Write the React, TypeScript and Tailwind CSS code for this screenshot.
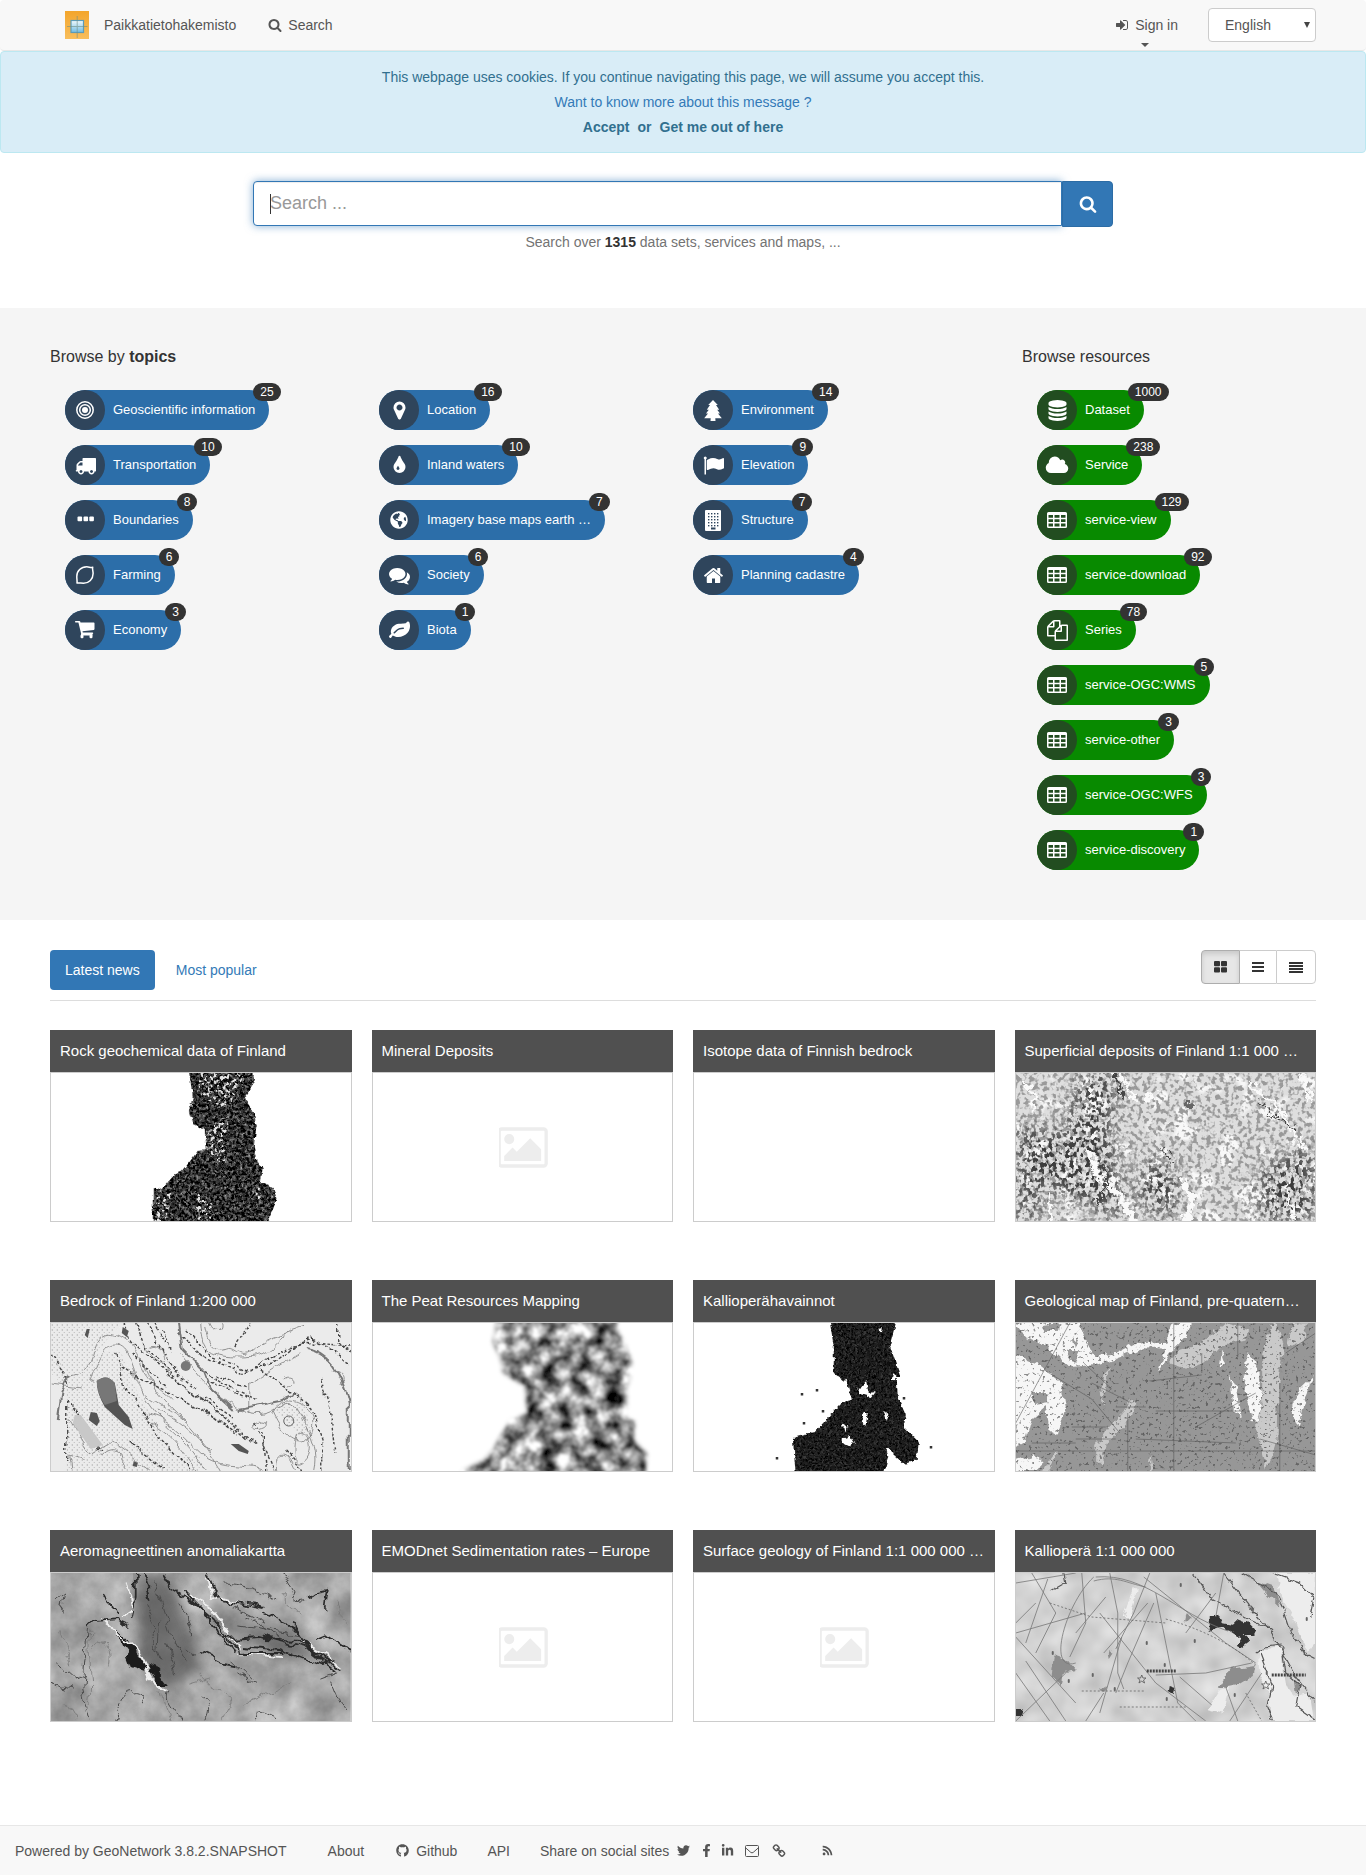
import React from "react";
import { FaFacebookF, FaGithub, FaGlobeAmericas, FaLinkedinIn, FaRss, FaTwitter } from "react-icons/fa";

const SEARCH =
  "M1216 832q0-185-131.5-316.5t-316.5-131.5-316.5 131.5-131.5 316.5 131.5 316.5 316.5 131.5 316.5-131.5 131.5-316.5zm512 832q0 52-38 90t-90 38q-54 0-90-38l-343-342q-179 124-399 124-143 0-273.5-55.5t-225-150-150-225-55.5-273.5 55.5-273.5 150-225 225-150 273.5-55.5 273.5 55.5 225 150 150 225 55.5 273.5q0 220-124 399l343 343q37 37 37 90z";
const SIGN_IN =
  "M1312 896q0 26-19 45l-544 544q-19 19-45 19t-45-19-19-45v-288h-448q-26 0-45-19t-19-45v-384q0-26 19-45t45-19h448v-288q0-26 19-45t45-19 45 19l544 544q19 19 19 45zm352-352v704q0 119-84.5 203.5t-203.5 84.5h-320q-13 0-22.5-9.5t-9.5-22.5q0-4-1-20t-.5-26.5 3-23.5 10-19.5 20.5-6.5h320q66 0 113-47t47-113v-704q0-66-47-113t-113-47h-312l-11.5-1-11.5-3-8-5.5-7-9-2-13.5q0-4-1-20t-.5-26.5 3-23.5 10-19.5 20.5-6.5h320q119 0 203.5 84.5t84.5 203.5z";
const MARKER =
  "M1152 640q0-106-75-181t-181-75-181 75-75 181 75 181 181 75 181-75 75-181zm256 0q0 109-33 179l-364 774q-16 33-47.5 52t-67.5 19-67.5-19-46.5-52l-365-774q-33-70-33-179 0-212 150-362t362-150 362 150 150 362z";
const TRUCK =
  "M640 1408q0-52-38-90t-90-38-90 38-38 90 38 90 90 38 90-38 38-90zm-384-512h384v-256h-158q-13 0-22 9l-195 195q-9 9-9 22v30zm1280 512q0-52-38-90t-90-38-90 38-38 90 38 90 90 38 90-38 38-90zm256-1088v1024q0 15-4 26.5t-13.5 18.5-16.5 11.5-23.5 6-22.5 2-25.5 0-22.5-.5q0 106-75 181t-181 75-181-75-75-181h-384q0 106-75 181t-181 75-181-75-75-181h-64q-3 0-22.5.5t-25.5 0-22.5-2-23.5-6-16.5-11.5-13.5-18.5-4-26.5q0-26 19-45t45-19v-320q0-8-.5-35t0-38 2.5-34.5 6.5-37 14-30.5 22.5-30l198-198q19-19 50.5-32t58.5-13h160v-192q0-26 19-45t45-19h1024q26 0 45 19t19 45z";
const TINT =
  "M896 1152q0-36-20-69-1-1-15.5-22.5t-25.5-38-25-44-21-50.5q-4-16-21-16t-21 16q-7 23-21 50.5t-25 44-25.5 38-15.5 22.5q-20 33-20 69 0 53 37.5 90.5t90.5 37.5 90.5-37.5 37.5-90.5zm512-128q0 212-150 362t-362 150-362-150-150-362q0-145 81-275 6-9 62.5-90.5t101-151 99.5-178 83-201.5q9-30 34-47t51-17 51.5 17 33.5 47q28 93 83 201.5t99.5 178 101 151 62.5 90.5q81 127 81 275z";
const COMMENTS =
  "M1408 768q0 139-94 257t-256.5 186.5-353.5 68.5q-86 0-176-16-124 88-278 128-36 9-86 16h-3q-11 0-20.5-8t-11.5-21q-1-3-1-6.5t.5-6.5 2-6l2.5-5 3.5-5.5 4-5 4.5-5 4-4.5q5-6 23-25t26-29.5 22.5-29 25-38.5 20.5-44q-124-72-195-177t-71-224q0-139 94-257t256.5-186.5 353.5-68.5 353.5 68.5 256.5 186.5 94 257zm384 256q0 120-71 224.5t-195 176.5q10 24 20.5 44t25 38.5 22.5 29 26 29.5 23 25q1 1 4 4.5t4.5 5 4 5 3.5 5.5l2.5 5 2 6 .5 6.5-1 6.5q-3 14-13 22t-22 7q-50-7-86-16-154-40-278-128-90 16-176 16-271 0-472-132 58 4 88 4 161 0 309-45t264-129q125-92 192-212t67-254q0-77-23-152 129 71 204 178t75 230z";
const LEAF =
  "M1280 704q0-26-19-45t-45-19q-172 0-318 49.5t-259.5 134-235.5 219.5q-19 21-19 45 0 26 19 45t45 19q24 0 45-19 27-24 74-71t67-66q137-124 268.5-176t313.5-52q26 0 45-19t19-45zm512-198q0 95-20 193-46 224-184.5 383t-357.5 268q-214 108-438 108-148 0-286-47-15-5-88-42t-96-37q-16 0-39.5 32t-45 70-52.5 70-60 32q-43 0-63.5-17.5t-45.5-59.5q-2-4-6-11t-5.5-10-3-9.5-1.5-13.5q0-35 31-73.5t68-65.5 68-56 31-48q0-4-14-38t-16-44q-9-51-9-104 0-115 43.5-220t119-184.5 170.5-139 204-95.5q55-18 145-25.5t179.5-9 178.5-6 163.5-24 113.5-56.5l29.5-29.5 29.5-28 27-20 36.5-16 43.5-4.5q39 0 70.5 46t47.5 112 24 124 8 96z";
const FLAG =
  "M320 256q0 72-64 110v1266q0 13-9.5 22.5t-22.5 9.5h-64q-13 0-22.5-9.5t-9.5-22.5v-1266q-64-38-64-110 0-53 37.5-90.5t90.5-37.5 90.5 37.5 37.5 90.5zm1472 64v763q0 25-12.5 38.5t-39.5 27.5q-215 116-369 116-61 0-123.5-22t-108.5-48-115.5-48-142.5-22q-192 0-464 146-17 9-33 9-26 0-45-19t-19-45v-742q0-32 31-55 21-14 79-43 236-120 421-120 107 0 200 29t219 88q38 19 88 19 54 0 117.5-21t110-47 88-47 54.5-21q26 0 45 19t19 45z";
const HOME =
  "M1472 992v480q0 26-19 45t-45 19h-384v-384h-256v384h-384q-26 0-45-19t-19-45v-480q0-1 .5-3t.5-3l575-474 575 474q1 2 1 6zm223-69l-62 74q-8 9-21 11h-3q-13 0-21-7l-692-577-692 577q-12 8-24 7-13-2-21-11l-62-74q-8-10-7-23.5t11-21.5l719-599q32-26 76-26t76 26l244 204v-195q0-14 9-23t23-9h192q14 0 23 9t9 23v408l219 182q10 8 11 21.5t-7 23.5z";
const DATABASE =
  "M896 768q237 0 443-43t325-127v170q0 69-103 128t-280 93.5-385 34.5-385-34.5-280-93.5-103-128v-170q119 84 325 127t443 43zm0 768q237 0 443-43t325-127v170q0 69-103 128t-280 93.5-385 34.5-385-34.5-280-93.5-103-128v-170q119 84 325 127t443 43zm0-384q237 0 443-43t325-127v170q0 69-103 128t-280 93.5-385 34.5-385-34.5-280-93.5-103-128v-170q119 84 325 127t443 43zm0-1152q208 0 385 34.5t280 93.5 103 128v128q0 69-103 128t-280 93.5-385 34.5-385-34.5-280-93.5-103-128v-128q0-69 103-128t280-93.5 385-34.5z";
const CLOUD =
  "M1984 1152q0 159-112.5 271.5t-271.5 112.5h-1088q-185 0-316.5-131.5t-131.5-316.5q0-132 71-241.5t187-163.5q-2-28-2-43 0-212 150-362t362-150q158 0 286.5 88t187.5 230q70-62 166-62 106 0 181 75t75 181q0 75-41 138 129 30 213 134.5t84 239.5z";
const FILES =
  "M1696 384q40 0 68 28t28 68v1216q0 40-28 68t-68 28h-960q-40 0-68-28t-28-68v-288h-544q-40 0-68-28t-28-68v-672q0-40 20-88t48-76l408-408q28-28 76-48t88-20h416q40 0 68 28t28 68v328q68-40 128-40h416zm-544 213l-299 299h299v-299zm-640-384l-299 299h299v-299zm196 647l316-316v-416h-384v416q0 40-28 68t-68 28h-416v640h512v-256q0-40 20-88t48-76zm956 804v-1152h-384v416q0 40-28 68t-68 28h-416v640h896z";
const PICTURE =
  "M576 576q0 80-56 136t-136 56-136-56-56-136 56-136 136-56 136 56 56 136zm1024 384v448h-1408v-192l320-320 160 160 512-512zm96-704h-1600q-13 0-22.5 9.5t-9.5 22.5v1216q0 13 9.5 22.5t22.5 9.5h1600q13 0 22.5-9.5t9.5-22.5v-1216q0-13-9.5-22.5t-22.5-9.5zm160 32v1216q0 66-47 113t-113 47h-1600q-66 0-113-47t-47-113v-1216q0-66 47-113t113-47h1600q66 0 113 47t47 113z";
const LINK =
  "M1520 1216q0-40-28-68l-208-208q-28-28-68-28-42 0-72 32 3 3 19 18.5t21.5 21.5 15 19 13 25.5 3.5 27.5q0 40-28 68t-68 28q-15 0-27.5-3.5t-25.5-13-19-15-21.5-21.5-18.5-19q-33 31-33 73 0 40 28 68l206 207q27 27 68 27 40 0 68-26l147-146q28-28 28-67zm-703-705q0-40-28-68l-206-207q-28-28-68-28-39 0-68 27l-147 146q-28 28-28 67 0 40 28 68l208 208q27 27 68 27 42 0 72-31-3-3-19-18.5t-21.5-21.5-15-19-13-25.5-3.5-27.5q0-40 28-68t68-28q15 0 27.5 3.5t25.5 13 19 15 21.5 21.5 18.5 19q33-31 33-73zm895 705q0 120-85 203l-147 146q-83 83-203 83-121 0-204-85l-206-207q-83-83-83-203 0-123 88-209l-88-88q-86 88-208 88-120 0-204-84l-208-208q-84-84-84-204t85-203l147-146q83-83 203-83 121 0 204 85l206 207q83 83 83 203 0 123-88 209l88 88q86-88 208-88 120 0 204 84l208 208q84 84 84 204z";

function Glyph({ d, className, width = 1792 }: { d: string; className: string; width?: number }) {
  return (
    <svg viewBox={`0 0 ${width} 1792`} className={className} fill="currentColor" aria-hidden="true">
      <path d={d} />
    </svg>
  );
}

const big = "size-[21px]";

function TargetIcon() {
  return (
    <svg viewBox="0 0 18 18" className="size-[18px]" fill="none" stroke="currentColor" strokeWidth="1.5" aria-hidden="true">
      <circle cx="9" cy="9" r="8.2" />
      <circle cx="9" cy="9" r="5.3" />
      <circle cx="9" cy="9" r="3" fill="currentColor" stroke="none" />
    </svg>
  );
}
function DotsIcon() {
  return (
    <svg viewBox="0 0 17 8" className="h-2 w-[17px]" fill="currentColor" aria-hidden="true">
      <rect x="0.5" y="0.5" width="4.600" height="4.800" rx="1" />
      <rect x="6.500" y="0.5" width="4.600" height="4.800" rx="1" />
      <rect x="12.300" y="0.5" width="4.600" height="4.800" rx="1" />
    </svg>
  );
}
function LemonIcon() {
  return (
    <svg viewBox="0 0 18 18" className="size-[18px]" fill="none" stroke="currentColor" strokeWidth="1.5" strokeLinejoin="round" aria-hidden="true">
      <path d="M16.7 1.2C15 2 13 .8 10.800 .8C5 .8 .8 5 .8 10.500C.8 13.500 1.300 15 1 17.100C3 16.800 5 17.200 7.500 17.200C13 17.200 17.100 13 17.100 7.500C17.100 5 16.100 3 16.700 1.200Z" />
    </svg>
  );
}
function CartIcon() {
  return (
    <svg viewBox="0 0 20 18" className="h-[18px] w-5" fill="currentColor" aria-hidden="true">
      <path d="M.6 0H4.400Q5.100 0 5.300 .8L5.500 1.500H18.800Q19.500 1.500 19.500 2.300V8Q19.500 8.700 18.800 8.900L7.500 10.300L7.800 11.500H17.500Q18.200 11.500 18.200 12.200T17.500 13H6.900Q6.300 13 6.100 12.400L3.400 1.500H.6Q0 1.500 0 .8T.6 0Z" />
      <rect x="5.500" y="13.500" width="3" height="3.800" rx="1.200" />
      <rect x="14.500" y="13.500" width="3" height="3.800" rx="1.200" />
      <rect x="6" y="12.500" width="11.500" height="2" />
    </svg>
  );
}
function TreeIcon() {
  return (
    <svg viewBox="0 0 18 21" className="h-[21px] w-[18px]" fill="currentColor" aria-hidden="true">
      <path d="M9 0L13.800 5H12L15.200 9.800H13.200L16 13.600H14L17.800 18.200H11.300L11.500 21H6.500L6.700 18.200H.2L4 13.600H2L4.800 9.800H2.800L6 5H4.200Z" />
    </svg>
  );
}
function BuildingIcon() {
  const rows = [3, 6, 9, 12, 15];
  return (
    <svg viewBox="0 0 16 21" className="h-[21px] w-4" aria-hidden="true">
      <rect width="16" height="21" rx="1" fill="currentColor" />
      {rows.map((y) =>
        [3, 6, 9, 12].map((x) => <rect key={`${x}-${y}`} x={x} y={y} width="1.400" height="1.400" className="fill-[#2f455c]" />)
      )}
      <rect x="6" y="17.500" width="4.500" height="2" className="fill-[#2f455c]" />
    </svg>
  );
}
function TableIcon() {
  return (
    <svg viewBox="0 0 20 16" className="h-4 w-5" fill="currentColor" fillRule="evenodd" aria-hidden="true">
      <path d="M1.500 0h17q1.500 0 1.500 1.500v13q0 1.500-1.500 1.500h-17q-1.500 0-1.500-1.500v-13q0-1.500 1.500-1.500zM1.500 3h4.500v2.700h-4.500zM7.500 3h5v2.700h-5zM14 3h4.500v2.700h-4.500zM1.500 7.200h4.500v2.900h-4.500zM7.500 7.200h5v2.900h-5zM14 7.200h4.500v2.900h-4.500zM1.500 11.600h4.500v2.900h-4.500zM7.500 11.600h5v2.900h-5zM14 11.600h4.500v2.900h-4.500z" />
    </svg>
  );
}

type ChipData = { icon: React.ReactNode; label: string; count: number };

const topics: ChipData[][] = [
  [
    { icon: <TargetIcon />, label: "Geoscientific information", count: 25 },
    { icon: <Glyph d={MARKER} className={big} />, label: "Location", count: 16 },
    { icon: <TreeIcon />, label: "Environment", count: 14 },
  ],
  [
    { icon: <Glyph d={TRUCK} className={big} />, label: "Transportation", count: 10 },
    { icon: <Glyph d={TINT} className={big} />, label: "Inland waters", count: 10 },
    { icon: <Glyph d={FLAG} className={big} />, label: "Elevation", count: 9 },
  ],
  [
    { icon: <DotsIcon />, label: "Boundaries", count: 8 },
    { icon: <FaGlobeAmericas className="size-[18px]" />, label: "Imagery base maps earth …", count: 7 },
    { icon: <BuildingIcon />, label: "Structure", count: 7 },
  ],
  [
    { icon: <LemonIcon />, label: "Farming", count: 6 },
    { icon: <Glyph d={COMMENTS} className={big} />, label: "Society", count: 6 },
    { icon: <Glyph d={HOME} className={big} />, label: "Planning cadastre", count: 4 },
  ],
  [
    { icon: <CartIcon />, label: "Economy", count: 3 },
    { icon: <Glyph d={LEAF} className={big} />, label: "Biota", count: 1 },
  ],
];

const resources: ChipData[] = [
  { icon: <Glyph d={DATABASE} className={big} />, label: "Dataset", count: 1000 },
  { icon: <Glyph d={CLOUD} width={2048} className="h-[21px] w-6" />, label: "Service", count: 238 },
  { icon: <TableIcon />, label: "service-view", count: 129 },
  { icon: <TableIcon />, label: "service-download", count: 92 },
  { icon: <Glyph d={FILES} className={big} />, label: "Series", count: 78 },
  { icon: <TableIcon />, label: "service-OGC:WMS", count: 5 },
  { icon: <TableIcon />, label: "service-other", count: 3 },
  { icon: <TableIcon />, label: "service-OGC:WFS", count: 3 },
  { icon: <TableIcon />, label: "service-discovery", count: 1 },
];

function Chip({ icon, label, count, green }: ChipData & { green?: boolean }) {
  return (
    <a
      href="#"
      className={`relative inline-flex h-10 items-center rounded-[20px] pr-3.5 text-[13px] whitespace-nowrap text-white ${green ? "bg-[#088a00]" : "bg-[#2c6ea9]"}`}
    >
      <span className={`mr-2 flex size-10 items-center justify-center rounded-full ${green ? "bg-[#224d20]" : "bg-[#2f455c]"}`}>{icon}</span>
      {label}
      <span className="absolute -top-[7px] left-full -ml-4 h-[18px] rounded-[10px] bg-[#333] px-[7px] text-xs leading-[18px]">{count}</span>
    </a>
  );
}

/* Map previews, drawn on a 300 x 148 canvas. */

function Noise({ id, freq, octaves, seed, gain, bias }: { id: string; freq: string; octaves: number; seed: number; gain: number; bias: number }) {
  const row = `${gain} 0 0 0 ${bias}`;
  return (
    <filter id={id} x="0" y="0" width="100%" height="100%" colorInterpolationFilters="sRGB">
      <feTurbulence type="fractalNoise" baseFrequency={freq} numOctaves={octaves} seed={seed} result="n" />
      <feColorMatrix in="n" values={`${row} ${row} ${row} 0 0 0 0 1`} />
      <feComposite in2="SourceAlpha" operator="in" />
    </filter>
  );
}

function Specks({ id, freq, seed, gain, bias }: { id: string; freq: string; seed: number; gain: number; bias: number }) {
  return (
    <filter id={id} x="0" y="0" width="100%" height="100%" colorInterpolationFilters="sRGB">
      <feTurbulence type="fractalNoise" baseFrequency={freq} numOctaves={2} seed={seed} result="n" />
      <feColorMatrix in="n" values={`0 0 0 0 0 0 0 0 0 0 0 0 0 0 0 ${gain} 0 0 0 ${bias}`} result="a" />
      <feComposite in="SourceGraphic" in2="a" operator="in" />
    </filter>
  );
}

function Rough({ id, scale, freq = "0.15" }: { id: string; scale: number; freq?: string }) {
  return (
    <filter id={id} x="-5%" y="-5%" width="110%" height="110%" colorInterpolationFilters="sRGB">
      <feTurbulence type="fractalNoise" baseFrequency={freq} numOctaves={3} seed={4} result="n" />
      <feDisplacementMap in="SourceGraphic" in2="n" scale={scale} xChannelSelector="R" yChannelSelector="G" />
    </filter>
  );
}

function Canvas({ children }: { children: React.ReactNode }) {
  return (
    <svg viewBox="0 0 300 148" preserveAspectRatio="xMidYMid slice" className="size-full" fill="none" aria-hidden="true">
      {children}
    </svg>
  );
}

function GeochemMap() {
  return (
    <Canvas>
      <Noise id="geochem-n" freq="0.35" octaves={2} seed={7} gain={1.3} bias={-0.47} />
      <Specks id="geochem-w" freq="0.3" seed={2} gain={8} bias={-4.300} />
      <Rough id="geochem-r" scale={5} />
      <g filter="url(#geochem-r)">
        <path
          filter="url(#geochem-n)"
          fill="#222"
          d="M138-3L203-3L203 10L194 25L203 40L206 52L203 74L206 89L212 94L210 110L222 115L226 125L216 151L102 151L102 114L111 117L124 101L131 99L147 78L155 77L154 57L143 51L138 39L142 24Z"
        />
      </g>
      <path fill="#e4e4e4" filter="url(#geochem-w)" d="M146 0L194 0L184 24L176 36L150 24ZM156 56L178 40L174 92L160 84L152 76ZM106 124L124 118L114 148H104ZM144 118L162 130L160 148H146ZM204 112L214 118L206 130Z" />
    </Canvas>
  );
}

function SuperficialMap() {
  return (
    <Canvas>
      <Specks id="sup-a" freq="0.22" seed={3} gain={6} bias={-2.900} />
      <Specks id="sup-b" freq="0.24 0.2" seed={12} gain={9} bias={-4.500} />
      <Specks id="sup-w" freq="0.045" seed={31} gain={10} bias={-5.600} />
      <Rough id="sup-r" scale={16} />
      <filter id="sup-soft"><feGaussianBlur stdDeviation="10" /></filter>
      <mask id="sup-m">
        <g filter="url(#sup-soft)" fill="#fff">
          <path d="M62 0L105 0L95 50L110 148L40 120L0 90L0 50L50 60ZM0 60H25V148H0ZM245 95L300 70V148H240ZM130 80L165 100L160 148L120 130Z" />
        </g>
      </mask>
      <rect width="300" height="148" fill="#dedede" />
      <rect width="300" height="148" fill="#f8f8f8" filter="url(#sup-w)" />
      <rect width="300" height="148" fill="#9a9a9a" filter="url(#sup-a)" />
      <g mask="url(#sup-m)">
        <rect width="300" height="148" fill="#3c3c3c" filter="url(#sup-b)" />
      </g>
      <g filter="url(#sup-r)" stroke="#fafafa" strokeLinecap="round">
        <path strokeWidth="6" d="M74 80L84 106L104 122L118 148M166 108L176 126L170 148" />
        <path strokeWidth="3" d="M8 8L20 24L18 36M106 4L120 28M232 10L262 34L290 78M285 0L296 30M270 112L280 148M36 118L34 148" />
        <circle cx="134" cy="24" r="3" strokeWidth="4" />
      </g>
      <g filter="url(#sup-r)" stroke="#444">
        <path strokeWidth="3" d="M100 2L108 26M86 90L92 110L82 132" />
        <path strokeWidth="1.500" d="M244 28L258 44L280 56M148 76L158 90" />
        <path strokeWidth="8" stroke="#666" d="M173 28V36" />
      </g>
    </Canvas>
  );
}

function BedrockMap() {
  return (
    <Canvas>
      <pattern id="bed-dots" width="5" height="5" patternUnits="userSpaceOnUse">
        <path d="M1 1h1v2h-1zM3 4h1v1h-1z" fill="#bbb" />
      </pattern>
      <Rough id="bed-r" scale={9} freq="0.06" />
      <rect width="300" height="148" fill="#ebebeb" />
      <path fill="url(#bed-dots)" d="M0 0H72L60 12L46 30L30 56L10 60L0 50ZM48 30L70 28L80 56L110 110L130 148H16V60ZM224 86L254 80L262 118L246 110ZM120 136L150 132V148H120Z" />
      <g filter="url(#bed-r)">
        <g stroke="#888" strokeWidth="0.900">
          <path d="M12 56C24 50 36 54 42 30S64 8 78 20S96 60 116 80S150 112 170 148M40 60C50 30 60 14 72 26S82 60 100 84S140 120 156 148M156 4C160 24 166 30 176 26S190 40 204 26S236 12 254 4M150 0C152 30 160 34 190 34S220 22 240 8M160 0C164 10 172 10 170 0M130 30C150 60 160 70 190 86S236 70 244 84S270 120 264 148M18 96L40 130L60 118L100 148M96 92C120 96 130 112 150 130S200 140 214 148M100 100C120 110 130 124 146 148M108 88C128 96 144 110 160 128M92 70C110 84 120 86 136 100M88 40C96 60 110 66 120 76M94 20C100 30 104 14 112 30S100 40 94 20M112 40L122 56M222 90C230 70 262 76 262 100S240 130 222 90M246 112C260 100 264 130 254 138S240 130 246 112M50 132C60 120 78 130 72 144M226 148C224 130 236 124 244 148M198 62C206 58 232 40 250 30M198 62V90M0 60L30 64M34 138L18 132L20 148M206 100C216 94 222 104 210 106S200 104 206 100M232 56C240 50 246 60 236 62M282 48C290 44 296 56 290 62" />
        </g>
        <g stroke="#444" strokeWidth="1.400" strokeDasharray="3 2">
          <path d="M72 0L80 20L100 34L124 56L150 76L176 96L206 122M84 0L92 20L112 40L130 60L160 84L196 116M96 0L108 22L126 50L146 66M72 44L90 56L110 66L140 80L178 106M82 30L96 46L116 64M66 30L76 66L104 108L140 148M128 10L150 32L190 50L220 42L250 20L300 24M134 6L162 34L200 48L232 28L262 16L300 40M150 46L176 62L206 76M160 58L190 72M164 52L196 64M152 74L182 94M146 84L188 112M112 6L120 30M104 0L114 20M210 48L240 68L260 84L272 120V148M270 56L280 90L284 130M286 0V20L300 30M16 78V140M20 80L50 128M184 24L200 0M212 110L216 148M234 128L252 148M0 32L18 60M204 100L224 148M80 120L114 148" />
        </g>
        <g stroke="#777" strokeWidth="2">
          <path d="M128 0L132 26L152 46L160 66L182 86M256 26C280 30 292 54 298 80V148M18 52L10 70L6 96M188 86L230 78L244 72" />
        </g>
      </g>
      <g fill="#555">
        <path d="M46 58Q56 50 64 60L68 82L78 94L82 106L74 102L54 84Q46 70 46 58Z" />
        <path fill="#777" d="M46 58Q56 50 64 60L66 78L54 82Q46 70 46 58Z" />
        <path d="M40 89L46 90L49 98L46 103L38 97ZM180 121L188 121L198 128L197 131L188 128ZM72 4L78 8L76 14L71 10ZM36 6L39 6L37 15L34 12ZM83 138L87 140L86 144L82 143Z" />
        <circle cx="135" cy="43" r="5" fill="#777" />
      </g>
      <path fill="#c8c8c8" d="M24 92L30 92L52 122L40 126L22 100Z" />
      <circle cx="238" cy="98" r="5" fill="url(#bed-dots)" stroke="#666" />
    </Canvas>
  );
}

function PeatMap() {
  return (
    <Canvas>
      <Noise id="peat-n" freq="0.06" octaves={5} seed={21} gain={1.9} bias={-0.4} />
      <filter id="peat-s"><feGaussianBlur stdDeviation="1.100" /></filter>
      <filter id="peat-e"><feGaussianBlur stdDeviation="2" /></filter>
      <mask id="peat-m">
        <path
          filter="url(#peat-e)"
          fill="#fff"
          d="M125-6L243-6L246 10L250 17L255 26L259 40L257 56L253 67L255 80L253 94L262 99L261 117L274 130L272 156L86 156L92 146L112 137L124 120L138 97L154 90L152 62L142 58L130 49L128 36L120 19Z"
        />
      </mask>
      <g mask="url(#peat-m)">
        <g filter="url(#peat-s)">
          <rect x="70" y="-6" width="220" height="162" fill="#888" filter="url(#peat-n)" />
        </g>
      </g>
    </Canvas>
  );
}

function ObservationMap() {
  return (
    <Canvas>
      <Noise id="obs-n" freq="0.5" octaves={1} seed={9} gain={0.5} bias={-0.14} />
      <Rough id="obs-r" scale={5} freq="0.2" />
      <g filter="url(#obs-r)">
        <path
          filter="url(#obs-n)"
          fill="#1c1c1c"
          d="M136-3L203-3L196 22L206 52L203 55L204 74L212 92L210 104L225 119L223 137L210 141L196 128L190 151L102 151L99 115L121 109L149 79L158 77L153 59L140 50L140 24Z"
        />
        <path fill="#fff" d="M160 58L165 68L172 58L175 70L182 69L178 74L166 71ZM170 88L174 90L172 102L168 100ZM149 101L154 104L151 110ZM148 116L156 113L160 120L154 123L148 120ZM192 124L200 130L196 137ZM190 88L195 92L193 98ZM200 50L208 56L198 56ZM184 6L189 5L188 9Z" />
      </g>
      <g fill="#333">
        {[[108, 71], [123, 67], [210, 75], [129, 88], [138, 91], [110, 100], [83, 135], [237, 124]].map(([x, y]) => (
          <rect key={`${x}-${y}`} x={x - 1} y={y - 1} width="2.500" height="2.500" />
        ))}
      </g>
    </Canvas>
  );
}

function GeologicalMap() {
  return (
    <Canvas>
      <Rough id="geo-r" scale={8} freq="0.12" />
      <Specks id="geo-n" freq="0.3" seed={5} gain={9} bias={-5.600} />
      <rect width="300" height="148" fill="#979797" />
      <g filter="url(#geo-r)">
        <path fill="#f6f6f6" d="M-4-4L62-4L70 18L78 34L100 30L120 20L140 18L152 18L158 0L176 0L170 14L156 28L142 48L150 26L128 24L104 34L80 42L54 44L30 22L10 14ZM-4 32L24 42L46 60L50 84L42 112L34 108L30 84L16 96L10 118L0 124ZM232 28L242 44L248 100L236 98L228 60ZM214 52L222 70L226 94L218 86ZM298 52L290 72L282 104L276 88L284 66ZM206 28L210 40L204 44ZM0 138L20 132L28 140L20 148H0Z" />
        <g fill="#c9c9c9" stroke="#888" strokeWidth="0.600">
          <path d="M256 0L262 4L268 20L264 60L262 118L250 148L246 132L240 106L246 80L246 30ZM152 40L162 28L180 22L196 10L210 0L234 6L230 18L206 22L190 40L170 46ZM112 78L120 80L118 92L104 108L92 120L86 142L80 140L80 122L92 104L106 90ZM88 50L96 42L90 60L88 88L84 66ZM26 148L42 126L40 136L34 148ZM132 148L136 130L138 148ZM276 0L292 0L286 20L272 24Z" />
        </g>
        <path fill="#999" d="M28 2L44 0L42 8L30 8ZM14 70L30 70L34 80L20 82ZM50 28L64 28L58 40ZM56 14L62 20L58 24Z" />
      </g>
      <rect width="300" height="148" fill="#444" filter="url(#geo-n)" opacity="0.6" />
      <g stroke="#555" strokeWidth="0.700" opacity="0.800">
        <path d="M158 0V148M112 90V148M0 128H300M222 0V34M264 60V148M100 84H130M30 48L76 76L104 110M76 60L116 80M54 0L0 100M134 58L186 52M140 88H230M180 104L222 80L240 70M56 104H90M16 120H60M60 116H100M186 30V50M120 116L220 120M244 116L300 132M68 40L96 66M270 30L300 10" />
        <path strokeDasharray="1 5" strokeWidth="1.500" d="M50 100L200 120M170 60L230 90M180 20L240 10M250 10V130M270 50L286 140M72 8L130 12M180 88L180 140" />
      </g>
    </Canvas>
  );
}

function MagneticMap() {
  return (
    <Canvas>
      <Rough id="mag-r" scale={14} freq="0.06" />
      <Noise id="mag-n" freq="0.025" octaves={5} seed={14} gain={0.45} bias={0.43} />
      <filter id="mag-s"><feGaussianBlur stdDeviation="0.600" /></filter>
      <filter id="mag-b"><feGaussianBlur stdDeviation="7" /></filter>
      <rect width="300" height="148" fill="#aaa" filter="url(#mag-n)" />
      <path fill="#555" opacity="0.700" filter="url(#mag-b)" d="M86 0L116 0L140 50L150 90L120 120L90 90ZM180 56L240 60L280 92L220 82Z" />
      <g filter="url(#mag-s)">
        <g filter="url(#mag-r)" strokeLinecap="round">
          <path fill="#1c1c1c" d="M66 56L76 64L84 80L94 92L104 96L116 112L110 112L98 98L80 92L74 76Z" />
          <g stroke="#eee" strokeWidth="2">
            <path d="M50 46L64 56L86 78L100 104L116 118M76 12L82 36L72 42M134 18L160 34L180 62L190 80L230 84M252 70L276 84L288 92M158 0L164 24L200 34" />
          </g>
          <g stroke="#2b2b2b" strokeWidth="1.800">
            <path d="M38 54L44 48L66 46L80 52M84 0L84 26L80 44M56 22L66 40M92 0L100 24M112 0L122 16L150 34L164 46L180 70L192 80L234 80M134 18L152 36L160 48L184 80M158 0L170 28L214 36M176 66L210 64L256 76L284 98M216 42L244 56L262 78L288 96M214 66L248 68L270 84M266 66L276 62L300 80M258 26L266 20L276 18L274 34M150 80L170 90L184 92M190 72L230 76L270 92L284 88M240 50L252 66M256 72L270 90" />
          </g>
          <g stroke="#4a4a4a" strokeWidth="1">
            <path d="M38 56L34 90L32 116L40 148M6 90L24 106L34 100M0 110L20 116M170 10C190 10 210 18 222 24M182 34L214 50M190 52L250 62M196 44L236 70M240 20L252 30M232 0L244 22M150 120C160 124 162 140 154 148M204 148C200 130 210 136 226 144M280 110L288 130L296 140M270 106L286 100M118 118C112 130 126 138 130 148M4 28L14 20L10 40M96 30L104 60M104 10L120 60L136 90M110 50L108 80M116 70L124 100M100 60L112 90M134 74L146 80M128 30L140 60M64 148C72 120 84 110 94 130M188 100L204 112M180 86L200 106" />
          </g>
          <g stroke="#777" strokeWidth="0.800">
            <path d="M44 76C50 60 64 76 58 92M40 60C36 90 50 120 34 140M8 60L20 90M196 130L240 110M150 100L180 130L170 148M230 20L250 40M286 30L296 50M14 130L24 148M140 110L160 104M110 120L120 148" />
          </g>
        </g>
      </g>
    </Canvas>
  );
}

function KallioperaMap() {
  return (
    <Canvas>
      <Rough id="kal-r" scale={7} freq="0.1" />
      <Noise id="kal-n" freq="0.04" octaves={2} seed={8} gain={0.22} bias={0.71} />
      <rect width="300" height="148" fill="#d3d3d3" filter="url(#kal-n)" />
      <g filter="url(#kal-r)">
        <path fill="#ededed" d="M260 0L300 0V70L292 80L280 50L268 30ZM242 78L264 74L270 110L276 124L294 120L298 148H256L254 120L244 104ZM192 136L204 118L214 114L208 140ZM108 44L118 16L121 18L114 44Z" />
        <path fill="#8d8d8d" d="M38 82L50 86L60 98L48 100L46 112L36 104ZM202 116L214 96L240 92L238 102L222 112ZM240 8L258 14L264 34L250 20ZM82 118L92 112L88 120ZM170 40L174 44L168 50ZM92 76L98 80L94 86ZM278 108L286 112L280 120Z" />
        <path fill="#333" d="M194 42L202 42L206 50L216 52L222 46L232 50L240 58L238 62L228 62L234 68L226 74L222 72L226 66L214 58L204 54L194 58Z" />
        <path fill="#333" d="M154 112L160 114L158 121L153 118ZM0 136L8 136L6 142H0Z" />
        <g stroke="#555" strokeWidth="1.200">
          <path d="M48 0L50 10L36 18M208 0L236 36L256 60L280 104L300 130M178 0L194 24L232 46L254 56M226 0L260 20L268 36L276 60L292 84L300 88M256 0L284 10L298 24L294 44M240 80L250 74L266 72M244 80L256 112L252 134L258 148M266 74L270 100L284 112L280 134L300 148" />
        </g>
      </g>
      <g stroke="#777" strokeWidth="0.800">
        <path d="M32 6L10 70M20 30L0 50M66 0L70 50L54 84M94 0L102 40V100L108 116M134 0L118 40L100 76M138 30L112 90L100 120M132 30L88 80M140 20L150 70L162 130L180 148M84 40L140 110L190 148M70 40L0 60M0 10L60 0M78 4C50 30 30 100 60 90M80 4C130 0 160 40 212 58M16 0L40 40L20 80M0 64L60 130M0 100L34 148M10 88L50 148M78 8C100 2 110 10 130 14M0 148L50 100M106 64L84 140M128 4L210 70L240 90M140 102L190 100L236 90M200 44L208 0M164 104L196 132M214 148L246 100M222 148L210 114M170 60L200 20M60 60L90 24M88 120L70 148" />
        <path strokeDasharray="2 2" stroke="#666" d="M34 30L76 44L150 50M66 118H130M104 134H172M150 46C200 60 226 80 240 92M230 120L246 148" />
      </g>
      <path d="M131 98H160M256 102H290" stroke="#444" strokeWidth="3" strokeDasharray="2 1" />
      <path d="M126 102l1.200 3h3l-2.400 2 1 3-2.800-1.800-2.800 1.800 1-3-2.400-2h3zM250 108l1.200 3h3l-2.400 2 1 3-2.800-1.800-2.800 1.800 1-3-2.400-2h3z" stroke="#555" strokeWidth="0.800" />
      <g fill="#666">
        {[[36, 78], [148, 90], [52, 106], [98, 114], [178, 66], [164, 10], [150, 124], [218, 120], [130, 68], [290, 44], [76, 100], [250, 98]].map(([x, y]) => (
          <rect key={`${x}-${y}`} x={x} y={y} width="2" height="4" rx="1" />
        ))}
      </g>
    </Canvas>
  );
}

function NoPicture() {
  return (
    <div className="flex size-full items-center justify-center pl-0.5 text-[#ededed]">
      <Glyph d={PICTURE} width={1856} className="h-[47px] w-[49px]" />
    </div>
  );
}

const cards: { title: string; preview?: React.ReactNode }[] = [
  { title: "Rock geochemical data of Finland", preview: <GeochemMap /> },
  { title: "Mineral Deposits", preview: <NoPicture /> },
  { title: "Isotope data of Finnish bedrock" },
  { title: "Superficial deposits of Finland 1:1 000 …", preview: <SuperficialMap /> },
  { title: "Bedrock of Finland 1:200 000", preview: <BedrockMap /> },
  { title: "The Peat Resources Mapping", preview: <PeatMap /> },
  { title: "Kallioperähavainnot", preview: <ObservationMap /> },
  { title: "Geological map of Finland, pre-quatern…", preview: <GeologicalMap /> },
  { title: "Aeromagneettinen anomaliakartta", preview: <MagneticMap /> },
  { title: "EMODnet Sedimentation rates – Europe", preview: <NoPicture /> },
  { title: "Surface geology of Finland 1:1 000 000 …", preview: <NoPicture /> },
  { title: "Kallioperä 1:1 000 000", preview: <KallioperaMap /> },
];

function Logo() {
  return (
    <svg viewBox="0 0 24 28" className="h-7 w-6" aria-hidden="true">
      <defs>
        <linearGradient id="logo-bg" x1="0" y1="0" x2="0" y2="1">
          <stop offset="0" stopColor="#f3a52c" />
          <stop offset="1" stopColor="#f8be5c" />
        </linearGradient>
        <linearGradient id="logo-box" x1="0" y1="0" x2="0" y2="1">
          <stop offset="0" stopColor="#f2fafd" />
          <stop offset="1" stopColor="#6fbbe2" />
        </linearGradient>
      </defs>
      <rect width="24" height="28" fill="url(#logo-bg)" />
      <rect x="6" y="9.500" width="12.500" height="12" fill="url(#logo-box)" stroke="#5b9bb8" strokeWidth="1.200" />
      <path d="M12.200 5V27M2 15.500H22.500" stroke="#6f8f86" strokeWidth="1" opacity="0.600" />
    </svg>
  );
}

function Header() {
  return (
    <nav className="flex h-[51px] items-start justify-between rounded border-b border-[#e7e7e7] bg-[#f8f8f8] pr-[50px] pl-[65px]">
      <div className="flex h-[50px] items-center">
        <a href="#" className="flex items-center gap-[15px]">
          <Logo />
          Paikkatietohakemisto
        </a>
        <a href="#" className="ml-8 flex items-center gap-1.5">
          <Glyph d={SEARCH} className="size-3.5" />
          Search
        </a>
      </div>
      <div className="flex h-[50px] items-center">
        <a href="#" className="relative mr-[30px] flex items-center gap-1.5">
          <Glyph d={SIGN_IN} className="size-3.5" />
          Sign in
          <span className="absolute top-full left-1/2 -ml-1.5 mt-2 border-x-4 border-t-4 border-x-transparent border-t-[#555]" />
        </a>
        <div className="relative">
          <select aria-label="Language" className="h-[34px] w-[108px] appearance-none rounded border border-[#ccc] bg-white px-4 text-sm text-[#555]">
            <option>English</option>
          </select>
          <svg viewBox="0 0 6 6" className="pointer-events-none absolute top-3.5 right-1.5 size-1.5" aria-hidden="true">
            <path d="M0 0H6L3 6Z" fill="#444" />
          </svg>
        </div>
      </div>
    </nav>
  );
}

function CookieNotice() {
  return (
    <div className="rounded border border-[#bce8f1] bg-[#d9edf7] pt-[13px] pb-3 text-center leading-[25px] text-[#31708f]">
      <p>This webpage uses cookies. If you continue navigating this page, we will assume you accept this.</p>
      <p>
        <a href="#" className="text-[#337ab7]">Want to know more about this message ?</a>
      </p>
      <p className="flex justify-center gap-2 font-bold">
        <button type="button">Accept</button>
        <span>or</span>
        <button type="button">Get me out of here</button>
      </p>
    </div>
  );
}

function SearchBox() {
  return (
    <section className="px-[50px] pt-7 pb-14">
      <form className="mx-auto flex max-w-[860px]">
        <div className="relative grow">
          <input
            type="text"
            aria-label="Search"
            placeholder="Search ..."
            className="h-[45px] w-full rounded-l border border-[#3277b5] bg-white px-4 text-lg text-[#555] shadow-[inset_0_1px_1px_rgba(0,0,0,0.075),0_0_8px_rgba(50,119,181,0.6)] outline-none placeholder:text-[#999]"
          />
          <span className="absolute top-[13px] left-[17px] h-5 w-px bg-[#333]" />
        </div>
        <button type="submit" aria-label="Search" className="relative flex h-[46px] w-[51px] items-center justify-center rounded-r border border-[#2c6ca5] bg-[#3277b5] text-white">
          <Glyph d={SEARCH} className="size-[18px]" />
        </button>
      </form>
      <p className="mt-[5px] text-center leading-5 text-[#737373]">
        Search over <strong className="text-[#333]">1315</strong> data sets, services and maps, ...
      </p>
    </section>
  );
}

function Browse() {
  return (
    <section className="grid grid-cols-12 gap-[30px] bg-[#f5f5f5] px-[50px] pt-10 pb-[50px] text-[#333]">
      <div className="col-span-9">
        <h2 className="mb-6 text-base leading-[18px]">
          Browse by <strong>topics</strong>
        </h2>
        <div className="flex flex-col gap-[15px]">
          {topics.map((row, i) => (
            <div key={i} className="grid grid-cols-3">
              {row.map((chip) => (
                <div key={chip.label} className="flex pl-[15px]">
                  <Chip {...chip} />
                </div>
              ))}
            </div>
          ))}
        </div>
      </div>
      <div className="col-span-3">
        <h2 className="mb-6 text-base leading-[18px]">Browse resources</h2>
        <div className="flex flex-col items-start gap-[15px] pl-[15px]">
          {resources.map((chip) => (
            <Chip key={chip.label} {...chip} green />
          ))}
        </div>
      </div>
    </section>
  );
}

function ViewToggle() {
  return (
    <div className="flex h-[34px] text-[#333]">
      <button type="button" aria-label="Grid" className="flex w-[39px] items-center justify-center rounded-l border border-[#adadad] bg-[#e6e6e6] shadow-[inset_0_3px_5px_rgba(0,0,0,0.125)]">
        <svg viewBox="0 0 13 12" className="h-3 w-[13px]" fill="currentColor" aria-hidden="true">
          <rect width="6" height="5.300" rx="1" />
          <rect x="7" width="6" height="5.300" rx="1" />
          <rect y="6.300" width="6" height="5.300" rx="1" />
          <rect x="7" y="6.300" width="6" height="5.300" rx="1" />
        </svg>
      </button>
      <button type="button" aria-label="List" className="flex w-9 items-center justify-center border-y border-[#ccc] bg-white">
        <svg viewBox="0 0 12 10" className="h-2.5 w-3" fill="currentColor" aria-hidden="true">
          <path d="M0 0H12V2H0ZM0 4H12V6H0ZM0 8H12V10H0Z" />
        </svg>
      </button>
      <button type="button" aria-label="Compact list" className="flex w-10 items-center justify-center rounded-r border border-[#ccc] bg-white">
        <svg viewBox="0 0 14 11" className="h-[11px] w-3.5" fill="currentColor" aria-hidden="true">
          <path d="M0 0H14V2H0ZM0 3H14V5H0ZM0 6H14V8H0ZM0 9H14V11H0Z" />
        </svg>
      </button>
    </div>
  );
}

function News() {
  return (
    <main className="px-[50px] pt-[30px] pb-[103px]">
      <div className="flex items-start justify-between border-b border-[#ddd] pb-2.5">
        <div role="tablist" className="flex h-10 gap-1.5">
          <button type="button" role="tab" aria-selected="true" className="rounded bg-[#3277b5] px-[15px] text-white">Latest news</button>
          <button type="button" role="tab" aria-selected="false" className="px-[15px] text-[#337ab7]">Most popular</button>
        </div>
        <ViewToggle />
      </div>
      <div className="mt-[29px] grid grid-cols-4 gap-x-5 gap-y-[58px]">
        {cards.map((card) => (
          <a key={card.title} href="#" className="block min-w-0">
            <h3 className="truncate bg-[#505050] px-2.5 text-[15px] leading-[42px] text-white">{card.title}</h3>
            <div className="h-[150px] overflow-hidden border border-[#ccc] bg-white">{card.preview}</div>
          </a>
        ))}
      </div>
    </main>
  );
}

function Footer() {
  return (
    <footer className="flex h-[50px] items-center border-t border-[#e7e7e7] bg-[#f8f8f8] px-[15px]">
      <span>Powered by GeoNetwork 3.8.2.SNAPSHOT</span>
      <a href="#" className="ml-[41px]">About</a>
      <a href="#" className="ml-8 flex items-center gap-[7px]">
        <FaGithub className="size-[13px]" />
        Github
      </a>
      <a href="#" className="ml-[30px]">API</a>
      <span className="ml-[30px]">Share on social sites</span>
      <a href="#" aria-label="Twitter" className="ml-2"><FaTwitter className="size-[13px]" /></a>
      <a href="#" aria-label="Facebook" className="ml-2.5"><FaFacebookF className="size-[13px]" /></a>
      <a href="#" aria-label="LinkedIn" className="ml-2"><FaLinkedinIn className="size-[13px]" /></a>
      <a href="#" aria-label="E-mail" className="ml-[11px]">
        <svg viewBox="0 0 14 12" className="h-3 w-3.5" fill="none" stroke="currentColor" aria-hidden="true">
          <rect x="0.500" y="0.500" width="13" height="11" rx="1" />
          <path d="M0.800 3L5.800 7.400Q7 8.300 8.200 7.400L13.200 3" />
        </svg>
      </a>
      <a href="#" aria-label="Permalink" className="ml-[13px]"><Glyph d={LINK} className="size-3.5" /></a>
      <a href="#" aria-label="RSS feed" className="ml-9"><FaRss className="size-[11px]" /></a>
    </footer>
  );
}

export default function App() {
  return (
    <div className="bg-white font-['Liberation_Sans',Arial,sans-serif] text-sm text-[#555]">
      <Header />
      <CookieNotice />
      <SearchBox />
      <Browse />
      <News />
      <Footer />
    </div>
  );
}
